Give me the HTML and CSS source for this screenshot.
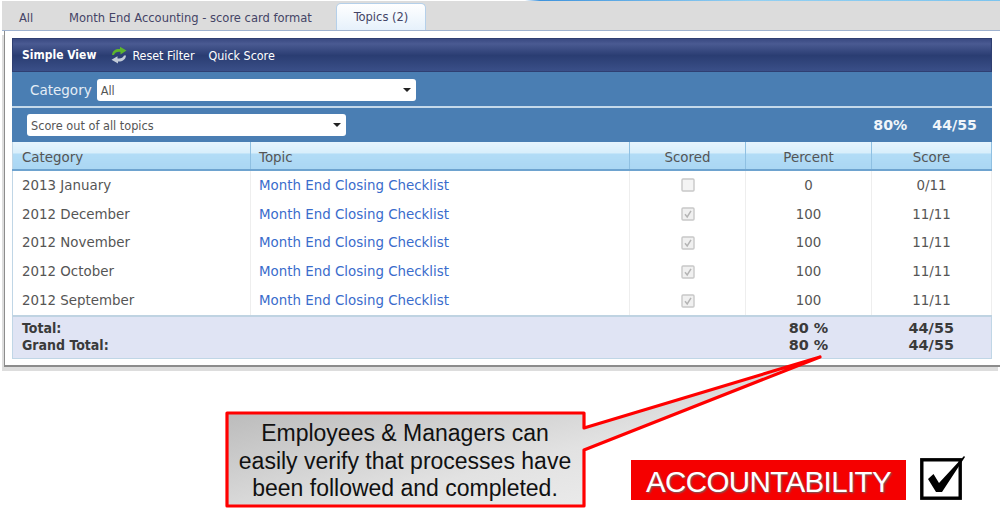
FILE: index.html
```html
<!DOCTYPE html>
<html lang="en">
<head>
    <meta charset="UTF-8">
    <meta name="viewport" content="width=device-width, initial-scale=1.0">
    <title>Topics score card</title>
    <link rel="stylesheet" href="styles.css">
</head>
<body>
    <svg class="defs" width="0" height="0">
        <symbol id="box-empty" viewBox="0 0 14 14">
            <rect x="1" y="1" width="12" height="12" rx="1" fill="#f4f4f4" stroke="#c8c8c8" stroke-width="1.4"/>
        </symbol>
        <symbol id="box-checked" viewBox="0 0 14 14">
            <rect x="1" y="1" width="12" height="12" rx="1" fill="#f0f0f0" stroke="#c8c8c8" stroke-width="1.4"/>
            <path d="M4 7.2 L6.2 10 L10 3.8" fill="none" stroke="#b4b4b4" stroke-width="1.5"/>
        </symbol>
    </svg>

    <div class="top-strip"></div>

    <!-- Tabs -->
    <div class="tabs">
        <span class="tab tab-all">All</span>
        <span class="tab tab-month">Month End Accounting - score card format</span>
        <span class="tab tab-active">Topics (2)</span>
    </div>

    <div class="frame">
        <div class="panel">
            <!-- Toolbar -->
            <div class="toolbar">
                <strong>Simple View</strong>
                <span class="reset">
                    <svg width="18" height="18" viewBox="0 0 18 18">
                        <path d="M2 9 C2.5 4.5 6 2.6 10 3 L10 .8 L16.5 4.6 L10.5 8.4 L10.5 6 C7.5 5.4 5 6.5 4 9 Z" fill="#5cb52c"/>
                        <path d="M16 9.5 C15.5 14 12 15.8 8 15.5 L8 17.6 L1.5 13.8 L7.5 10.2 L7.5 12.4 C10.5 13 13 12 14 9.5 Z" fill="#c2cbd8"/>
                    </svg>
                    Reset Filter
                </span>
                <span>Quick Score</span>
            </div>

            <!-- Filters -->
            <div class="filter-row category-row">
                <label>Category</label>
                <div class="dropdown">All</div>
            </div>
            <div class="filter-row score-row">
                <div class="dropdown">Score out of all topics</div>
                <div class="summary">
                    <span>80%</span>
                    <span>44/55</span>
                </div>
            </div>

            <!-- Results -->
            <table class="results">
                <colgroup>
                    <col class="col-category">
                    <col class="col-topic">
                    <col class="col-scored">
                    <col class="col-percent">
                    <col class="col-score">
                </colgroup>
                <thead>
                    <tr>
                        <th class="left">Category</th>
                        <th class="left topic">Topic</th>
                        <th>Scored</th>
                        <th>Percent</th>
                        <th>Score</th>
                    </tr>
                </thead>
                <tbody>
                    <tr>
                        <td class="left">2013 January</td>
                        <td class="left topic"><a href="#">Month End Closing Checklist</a></td>
                        <td><svg class="box"><use href="#box-empty"/></svg></td>
                        <td>0</td>
                        <td>0/11</td>
                    </tr>
                    <tr>
                        <td class="left">2012 December</td>
                        <td class="left topic"><a href="#">Month End Closing Checklist</a></td>
                        <td><svg class="box"><use href="#box-checked"/></svg></td>
                        <td>100</td>
                        <td>11/11</td>
                    </tr>
                    <tr>
                        <td class="left">2012 November</td>
                        <td class="left topic"><a href="#">Month End Closing Checklist</a></td>
                        <td><svg class="box"><use href="#box-checked"/></svg></td>
                        <td>100</td>
                        <td>11/11</td>
                    </tr>
                    <tr>
                        <td class="left">2012 October</td>
                        <td class="left topic"><a href="#">Month End Closing Checklist</a></td>
                        <td><svg class="box"><use href="#box-checked"/></svg></td>
                        <td>100</td>
                        <td>11/11</td>
                    </tr>
                    <tr>
                        <td class="left">2012 September</td>
                        <td class="left topic"><a href="#">Month End Closing Checklist</a></td>
                        <td><svg class="box"><use href="#box-checked"/></svg></td>
                        <td>100</td>
                        <td>11/11</td>
                    </tr>
                </tbody>
                <tfoot>
                    <tr>
                        <td class="left foot-label">Total:<br>Grand Total:</td>
                        <td></td>
                        <td></td>
                        <td>80 %<br>80 %</td>
                        <td>44/55<br>44/55</td>
                    </tr>
                </tfoot>
            </table>
        </div>
    </div>

    <!-- Callout pointing at the percent total, overlaps the frame -->
    <div class="callout">
        <svg class="callout-shape" width="620" height="170" viewBox="0 0 620 170">
            <defs>
                <linearGradient id="callout-fill" x1="0" y1="0" x2="1" y2="1">
                    <stop offset="0" stop-color="#aaaaaa"/>
                    <stop offset="0.6" stop-color="#e2e2e2"/>
                    <stop offset="1" stop-color="#f2f2f2"/>
                </linearGradient>
            </defs>
            <path d="M2 58 H359 V73 L595 2 L359 95 V151 H2 Z" fill="url(#callout-fill)" stroke="#ff0000" stroke-width="3.2" stroke-linejoin="round"/>
        </svg>
        <p class="callout-text">Employees &amp; Managers can<br>easily verify that processes have<br>been followed and completed.</p>
    </div>

    <div class="stamp">
        <div class="stamp-label">ACCOUNTABILITY</div>
        <svg class="stamp-check" width="50" height="48" viewBox="0 0 50 48">
            <rect x="3.8" y="5.8" width="38.4" height="38.4" fill="none" stroke="#000" stroke-width="3.4"/>
            <path d="M10 25 L15.5 20 L21 29 L46 2 L47 3 L24 38 L18 38 Z" fill="#000"/>
        </svg>
    </div>
</body>
</html>
```

FILE: styles.css
```css
/* General styling */
body {
    margin: 0;
    height: 514px;
    overflow: hidden;
    position: relative;
    background-color: #ffffff;
    font-family: 'DejaVu Sans', sans-serif;
    font-size: 13.4px;
    color: #555555;
}

.defs {
    display: block;
    height: 0;
}

.top-strip {
    height: 1px;
    background: linear-gradient(to right, #ffffff 0%, #ffffff 52.5%, #3f93dc 54%, #93d0f2 75%, #7cc4ee 100%);
}

/* Tabs */
.tabs {
    display: flex;
    align-items: flex-end;
    height: 29px;
    margin-left: 2px;
    background-color: #dcdcdc;
    border-bottom: 1px solid #9fb2cf;
    font-family: 'DejaVu Sans Condensed', 'DejaVu Sans', sans-serif;
    font-size: 12.8px;
    color: #444466;
}

.tab {
    height: 24px;
    line-height: 24px;
}

.tab-all {
    margin-left: 17px;
    width: 50px;
}

.tab-month {
    width: 267px;
}

.tab-active {
    height: 26px;
    line-height: 26px;
    width: 88px;
    text-align: center;
    background: linear-gradient(to bottom, #ffffff, #e6f1fb);
    border: 1px solid #b5d0ea;
    border-bottom: none;
    border-radius: 5px 5px 0 0;
}

/* Frame around the grid */
.frame {
    height: 327px;
    margin-left: 4px;
    padding: 7px 8px 0 7px;
    background-color: #ffffff;
    border-left: 1px solid #8c8c8c;
    border-bottom: 2px solid #8c8c8c;
    box-shadow: -2px 4px 0 #dddddd;
}

.panel {
    width: 980px;
}

/* Toolbar */
.toolbar {
    display: flex;
    align-items: center;
    gap: 14px;
    height: 34px;
    box-sizing: border-box;
    padding-left: 9px;
    border: 1px solid #2f3f72;
    background: linear-gradient(to bottom, #3a4a82 0%, #4a5a92 15%, #2a3d72 52%, #3a4f88 100%);
    font-family: 'DejaVu Sans Condensed', 'DejaVu Sans', sans-serif;
    font-size: 12.4px;
    color: #ffffff;
}

.toolbar strong {
    font-size: 12px;
}

.reset {
    display: flex;
    align-items: center;
    gap: 4px;
}

/* Filter rows */
.filter-row {
    display: flex;
    align-items: center;
    height: 34px;
    box-sizing: border-box;
    background-color: #4a7eb3;
}

.category-row {
    height: 36px;
    padding-top: 1px;
    padding-left: 18px;
    gap: 5px;
    font-size: 13.5px;
    color: #e4edf6;
    border-bottom: 2px solid #c5d9ea;
}

.score-row {
    padding-left: 15px;
    justify-content: space-between;
}

.dropdown {
    position: relative;
    width: 319px;
    height: 22px;
    line-height: 23px;
    box-sizing: border-box;
    padding-left: 4px;
    background-color: #ffffff;
    border-radius: 3px;
    font-family: 'DejaVu Sans Condensed', 'DejaVu Sans', sans-serif;
    font-size: 12.6px;
    color: #555555;
}

.dropdown::after {
    content: "";
    position: absolute;
    right: 5px;
    top: 9px;
    border-left: 4px solid transparent;
    border-right: 4px solid transparent;
    border-top: 4px solid #222222;
}

.summary {
    display: flex;
    gap: 25px;
    padding-right: 15px;
    font-size: 14.2px;
    font-weight: bold;
    color: #f0f5fa;
}

/* Results table */
.results {
    width: 979px;
    table-layout: fixed;
    border-collapse: collapse;
    border-left: 1px solid #c0d6e6;
    border-right: 1px solid #c0d6e6;
}

.col-category { width: 238px; }
.col-topic { width: 379px; }
.col-scored { width: 116px; }
.col-percent { width: 126px; }
.col-score { width: 120px; }

.results th,
.results td {
    padding: 0;
    text-align: center;
    font-weight: normal;
}

.results th.left,
.results td.left {
    text-align: left;
    padding-left: 9px;
}

.results th.topic,
.results td.topic {
    padding-left: 8px;
}

.results th {
    height: 24px;
    padding-top: 3px;
    background: linear-gradient(to bottom, #e6f4fd 0%, #d8eefb 40%, #b2dcf6 45%, #aad6f3 100%);
    border-right: 1px solid #8fc0e2;
    border-bottom: 2px solid #6ea3cf;
}

.results tbody td {
    height: 28.8px;
    border-right: 1px solid #eeeeee;
}

.results a {
    color: #3a6ccc;
    text-decoration: none;
}

.box {
    display: block;
    width: 14px;
    height: 14px;
    margin: 0 auto;
}

.results tfoot td {
    height: 41px;
    line-height: 17px;
    background-color: #e0e4f4;
    border-top: 2px solid #bfd3e2;
    border-bottom: 1px solid #c0d6e6;
    font-size: 14.4px;
    font-weight: bold;
    color: #3a3a3a;
}

.results tfoot td.foot-label {
    font-family: 'DejaVu Sans Condensed', 'DejaVu Sans', sans-serif;
    font-size: 14px;
}

/* Callout */
.callout {
    position: absolute;
    left: 225px;
    top: 355px;
    width: 360px;
    height: 153px;
}

.callout-shape {
    position: absolute;
    left: 0;
    top: 0;
}

.callout-text {
    position: relative;
    margin: 0;
    padding-top: 65px;
    text-align: center;
    font-family: 'Liberation Sans', sans-serif;
    font-size: 23px;
    line-height: 27.5px;
    color: #111111;
}

/* Accountability stamp */
.stamp {
    position: absolute;
    left: 631px;
    top: 454px;
    display: flex;
    align-items: flex-start;
    gap: 12px;
}

.stamp-label {
    width: 275px;
    height: 40px;
    margin-top: 6px;
    background-color: #f50000;
    text-align: center;
    font-family: 'Liberation Sans', sans-serif;
    font-size: 29.5px;
    line-height: 43px;
    letter-spacing: -0.6px;
    color: #ffffff;
    text-shadow: 1px 1px 2px #666666;
}
```
